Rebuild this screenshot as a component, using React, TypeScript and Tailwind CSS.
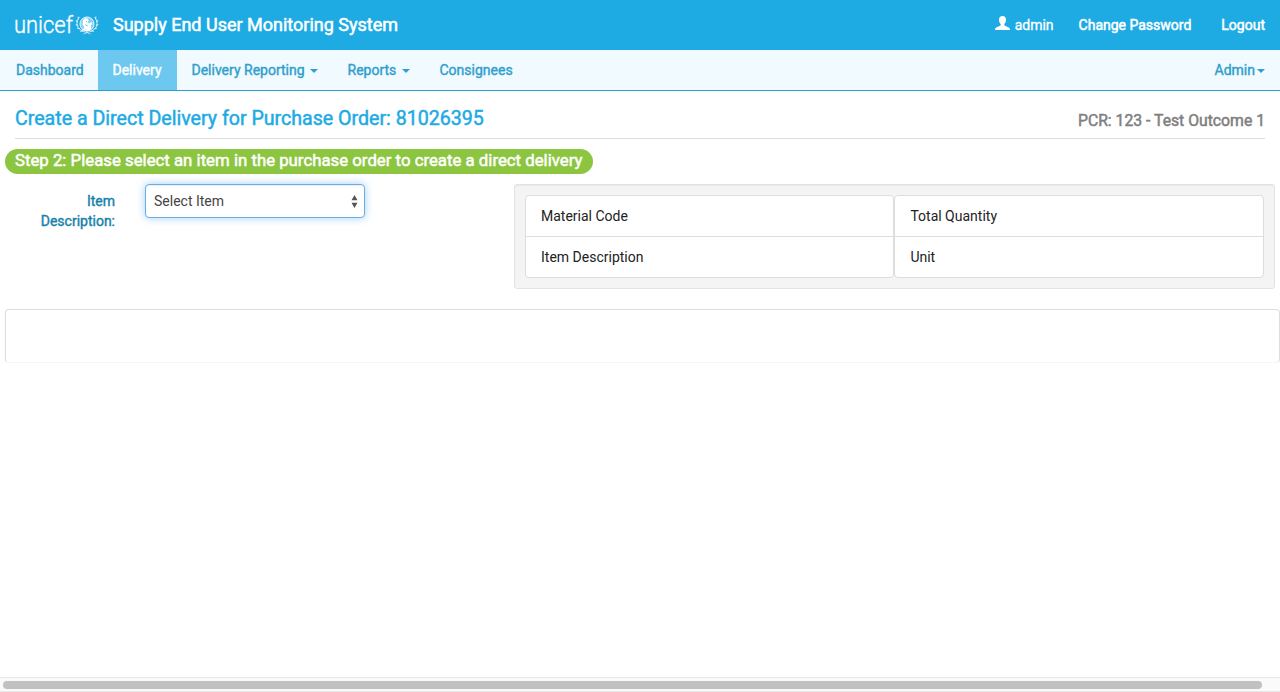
import React from "react";

function Emblem() {
  return (
    <svg className="mt-px shrink-0" width="24" height="21" viewBox="0 0 24 21" fill="none" stroke="white">
      <circle cx="12" cy="9" r="7" fill="white" fillOpacity="0.45" strokeWidth="1" strokeOpacity="0.9" />
      <path d="M6.500 15c2.300-1 2.800-2 2.500-3.800-1.500-.7-1.900-2.200-1.200-3.600-.5-2.800 2.200-5.100 4.600-4 1.500.8 1.400 2.400.4 3.500l1 1.300c1.100-.2 1.800-1.700 3-1 1 .8.200 2.200-1 2.600.8 2 .2 4-.8 5.500-2.200 1-6 1-8.500-.5z" fill="white" stroke="none" />
      <path d="M11.200 6.400l.8.8M10.600 9.800l2 1" stroke="#1eabe4" strokeWidth="0.800" />
      <path d="M4.500 2.200C-.1 7.200 1.300 14.700 10.500 17.200M19.500 2.200c4.600 5 3.200 12.500-6 15" strokeWidth="1" strokeOpacity="0.700" />
      <path d="M3.200 1.500l.2 3M.9 5.200l1.800 2.200M.8 9.300l2.200 1.700M1.900 13l3 .8M5 16.300l3-.4M20.800 1.500l-.2 3M23.100 5.200l-1.800 2.200M23.200 9.300L21 11M22.100 13l-3 .8M19 16.300l-3-.4" strokeWidth="1.200" strokeOpacity="0.650" />
      <path d="M8.500 19l4.500-2M15.500 19l-4.500-2" strokeWidth="0.800" strokeOpacity="0.800" />
    </svg>
  );
}

function Caret({ className = "" }: { className?: string }) {
  return <span className={`inline-block border-x-4 border-t-4 border-x-transparent border-t-[#2fa0cd] ${className}`} />;
}

function DetailList({ items, className }: { items: string[]; className: string }) {
  return (
    <ul className={`divide-y divide-[#ddd] rounded border border-[#ddd] bg-white ${className}`}>
      {items.map((item) => (
        <li key={item} className="h-[41px] px-[15px] pt-[10px] leading-5 last:h-10">{item}</li>
      ))}
    </ul>
  );
}

export default function App() {
  return (
    <div className="flex h-[692px] w-full flex-col overflow-hidden bg-white font-[Roboto,sans-serif] text-[14px] leading-5 text-[#333]">
      <header className="flex h-[50px] shrink-0 items-center bg-[#1eabe4] pr-[15px] pl-[14px] text-white [-webkit-text-stroke:0.5px]">
        <svg className="shrink-0 overflow-visible [-webkit-text-stroke:0px]" width="61" height="40" viewBox="0 0 61 40">
          <text x="0" y="27.500" textLength="59" lengthAdjust="spacingAndGlyphs" fontFamily="Roboto, sans-serif" fontWeight="300" fontSize="24" fill="white" stroke="white" strokeWidth="0.350">unicef</text>
        </svg>
        <Emblem />
        <span className="ml-[14px] text-[18px]">Supply End User Monitoring System</span>
        <div className="ml-auto flex items-center">
          <svg className="mr-[5px] mb-1" width="15" height="14" viewBox="0 0 15 14" fill="white">
            <path d="M7.500 0C5.300 0 4 1.500 4 3.800c0 1.900.7 3.400 1.700 4.300v1.100c-.5.900-3.400 1.300-4.800 2.600C.2 12.400 0 13 0 14h15c0-1-.2-1.600-.9-2.200-1.400-1.300-4.300-1.700-4.800-2.600V8.100C10.300 7.200 11 5.700 11 3.800 11 1.500 9.700 0 7.500 0z" />
          </svg>
          <span className="[-webkit-text-stroke:0.3px]">admin</span>
          <span className="ml-[25px]">Change Password</span>
          <span className="ml-[30px]">Logout</span>
        </div>
      </header>
      <nav className="flex h-[41px] shrink-0 items-stretch border-b border-[#2fa0cd] bg-[#f1fafe] leading-10 text-[#2fa0cd] [-webkit-text-stroke:0.4px]">
        <span className="w-[98px] pl-4">Dashboard</span>
        <span className="w-[79px] bg-[#6cc8ee] pl-[14.500px] text-white">Delivery</span>
        <span className="flex w-[156px] items-center pl-[14.500px]">Delivery Reporting<Caret className="mt-px ml-[5.500px]" /></span>
        <span className="flex w-[92px] items-center pl-[14.500px]">Reports<Caret className="mt-px ml-[5.500px]" /></span>
        <span className="pl-[14.500px]">Consignees</span>
        <span className="ml-auto flex items-center pr-[15px]">Admin<Caret className="mt-px ml-[2px]" /></span>
      </nav>
      <main className="flex flex-1 flex-col">
        <div className="mx-[15px] flex h-12 shrink-0 justify-between border-b border-[#ddd] [-webkit-text-stroke:0.5px]">
          <h1 className="pt-[17px] text-[19.600px] leading-[22px] text-[#1eabe4]">Create a Direct Delivery for Purchase Order: 81026395</h1>
          <h2 className="pt-5 text-[15.750px] leading-5 text-[#808080]">PCR: 123 - Test Outcome 1</h2>
        </div>
        <div className="mt-[10px] ml-[5px] h-[25px] w-[588px] shrink-0 rounded-[13px] bg-[#8cc540] pl-[10px] text-[16.800px] leading-[23px] whitespace-nowrap text-white [-webkit-text-stroke:0.5px]">
          Step 2: Please select an item in the purchase order to create a direct delivery
        </div>
        <div className="mt-[10px] flex h-[105px] shrink-0">
          <label className="w-[115px] pt-[7px] text-right text-[#1681aa] [-webkit-text-stroke:0.4px]">Item<br />Description:</label>
          <button className="ml-[30px] flex h-[34px] w-[220px] items-center justify-between rounded border border-[#66afe9] bg-white pr-[6px] pl-2 text-[#444] shadow-[inset_0_1px_1px_rgba(0,0,0,0.075),0_0_8px_rgba(102,175,233,0.6)]">
            Select Item
            <svg width="7" height="13" viewBox="0 0 7 13" fill="#555"><path d="M.5 5.300l3-5.300 3 5.300zM.5 7.700h6l-3 5.300z" /></svg>
          </button>
          <div className="ml-[149px] flex h-[105px] w-[761px] rounded-[3px] border border-[#e3e3e3] bg-[#f4f4f4] p-[10px] text-[#222] shadow-[inset_0_1px_1px_rgba(0,0,0,0.05)]">
            <DetailList className="w-[369.400px]" items={["Material Code", "Item Description"]} />
            <DetailList className="w-[369.600px]" items={["Total Quantity", "Unit"]} />
          </div>
        </div>
        <div className="mt-5 ml-[5px] h-[54px] shrink-0 rounded border border-[#ddd] border-b-[#f5f5f5]" />
      </main>
      <div className="h-[15px] shrink-0 border-y border-[#e8e8e8] bg-[#fafafa] px-[3px] pt-[3px]">
        <div className="h-2 w-[1259px] rounded-full bg-[#c1c1c1]" />
      </div>
    </div>
  );
}
